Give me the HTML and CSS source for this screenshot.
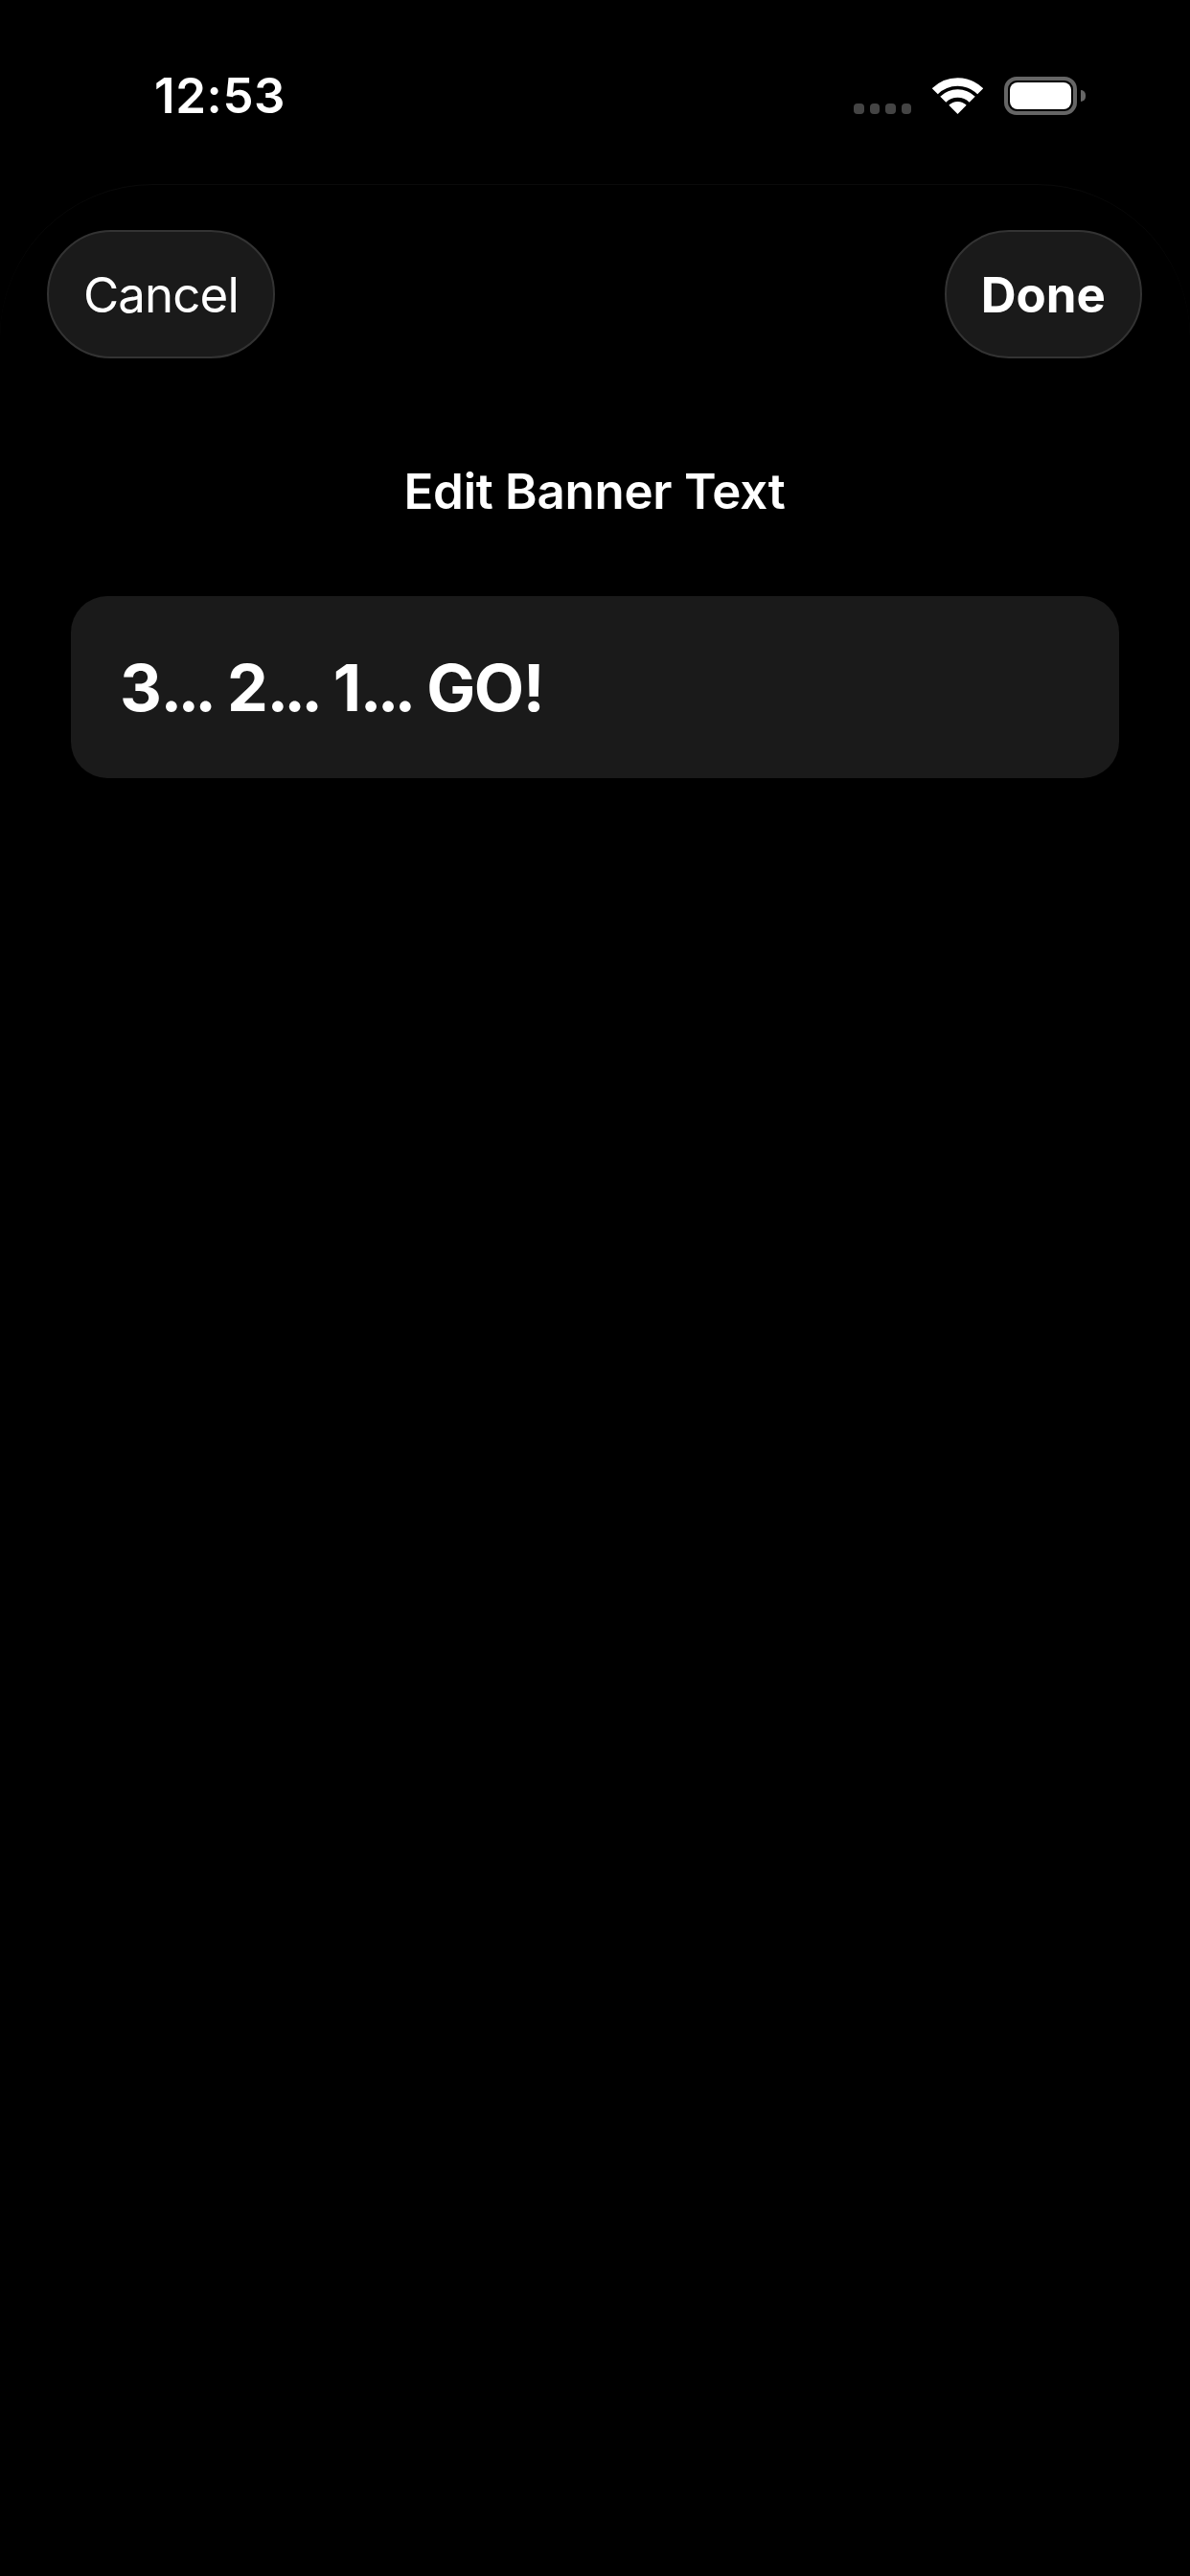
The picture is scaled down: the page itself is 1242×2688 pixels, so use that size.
FILE: index.html
```html
<!DOCTYPE html>
<html lang="en">

<head>
    <meta charset="UTF-8">
    <meta name="viewport" content="width=device-width, initial-scale=1.0">
    <title>Edit Banner Text</title>
    <link rel="stylesheet" href="styles.css">
</head>

<body>
    <div class="status-bar">
        <span class="time">12:53</span>
        <div class="status-icons">
            <div class="signal">
                <span class="dot"></span>
                <span class="dot"></span>
                <span class="dot"></span>
                <span class="dot"></span>
            </div>
            <svg class="wifi" width="53" height="38" viewBox="0 0 53 38">
                <path d="M2.8 14.3A33.5 33.5 0 0 1 50.2 14.3" fill="none" stroke="#fff" stroke-width="8.5" />
                <path d="M11.3 22.8A21.5 21.5 0 0 1 41.7 22.8" fill="none" stroke="#fff" stroke-width="8.5" />
                <path d="M26.5 38L17.3 28.8A13 13 0 0 1 35.7 28.8Z" fill="#fff" />
            </svg>
            <div class="battery">
                <div class="battery-body">
                    <div class="battery-level"></div>
                </div>
                <div class="battery-nub"></div>
            </div>
        </div>
    </div>

    <div class="sheet">
        <div class="toolbar">
            <button class="pill">Cancel</button>
            <button class="pill pill-bold">Done</button>
        </div>
        <h1 class="title">Edit Banner Text</h1>
        <div class="field">3<span class="dots">...</span> 2<span class="dots">...</span> 1<span class="dots">...</span> GO!</div>
    </div>
</body>

</html>
```

FILE: styles.css
```css
html,
body,
div,
h1,
button {
    padding: 0;
    margin: 0;
}

html {
    background-color: #000;
}

body {
    width: 1242px;
    height: 2688px;
    background-color: #000;
    color: #fff;
    font-family: "Inter", "Liberation Sans", sans-serif;
    overflow: hidden;
}

.status-bar {
    height: 192px;
    box-sizing: border-box;
    padding: 68px 109px 0 161px;
    display: flex;
    flex-direction: row;
    justify-content: space-between;
    align-items: flex-start;
}

.time {
    font-size: 51px;
    font-weight: 600;
    line-height: 64px;
    letter-spacing: 0.6px;
}

.status-icons {
    display: flex;
    flex-direction: row;
    align-items: flex-start;
    padding-top: 12px;
}

.signal {
    display: flex;
    flex-direction: row;
    gap: 6px;
    padding-top: 28px;
    margin-right: 22px;
}

.dot {
    width: 10.5px;
    height: 11px;
    border-radius: 4px;
    background-color: #444;
}

.wifi {
    margin: 1px 22px 0 0;
}

.battery {
    display: flex;
    flex-direction: row;
    align-items: center;
}

.battery-body {
    width: 76px;
    height: 40px;
    box-sizing: border-box;
    border: 4px solid #666;
    border-radius: 13px;
    padding: 2px;
}

.battery-level {
    width: 100%;
    height: 100%;
    background-color: #fff;
    border-radius: 8px;
}

.battery-nub {
    width: 5px;
    height: 12px;
    margin-left: 4px;
    background-color: #666;
    border-radius: 0 6px 6px 0;
}

.sheet {
    height: 2496px;
    box-sizing: border-box;
    padding: 47px 50px 0 49px;
    border-top: 1px solid #0a0a0a;
    border-radius: 160px 160px 0 0;
}

.toolbar {
    display: flex;
    flex-direction: row;
    justify-content: space-between;
}

.pill {
    height: 134px;
    box-sizing: border-box;
    padding: 0 36px;
    border: 2px solid #333;
    border-radius: 67px;
    background-color: #1a1a1a;
    color: #fff;
    font-family: inherit;
    font-size: 51px;
    font-weight: 400;
    letter-spacing: -0.9px;
}

.pill-bold {
    font-weight: 700;
    letter-spacing: 0;
}

.title {
    margin-top: 109px;
    font-size: 51px;
    font-weight: 600;
    line-height: 60px;
    letter-spacing: -0.25px;
    text-align: center;
}

.field {
    margin: 79px 24px 0 25px;
    height: 190px;
    box-sizing: border-box;
    padding-left: 51px;
    border-radius: 38px;
    background-color: #1a1a1a;
    font-size: 68px;
    font-weight: 700;
    line-height: 190px;
    letter-spacing: -1.4px;
    word-spacing: 1px;
}

.dots {
    letter-spacing: -4.8px;
}
```
